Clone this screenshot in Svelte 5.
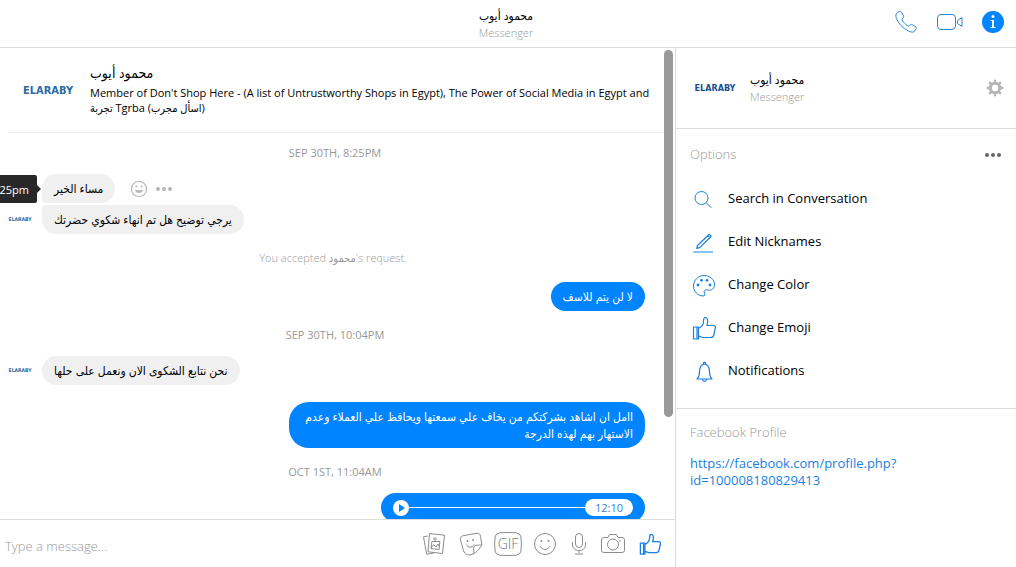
<script>
  const name = 'محمود أيوب';

  let draft = $state('');

  const options = [
    { icon: 'search', label: 'Search in Conversation' },
    { icon: 'edit', label: 'Edit Nicknames' },
    { icon: 'palette', label: 'Change Color' },
    { icon: 'like', label: 'Change Emoji' },
    { icon: 'bell', label: 'Notifications' }
  ];

  const tools = [
    { icon: 'photos', label: 'Add photos' },
    { icon: 'sticker', label: 'Choose a sticker' },
    { icon: 'gif', label: 'Choose a GIF' },
    { icon: 'smile', label: 'Choose an emoji' },
    { icon: 'mic', label: 'Record voice clip' },
    { icon: 'camera', label: 'Take photo' },
    { icon: 'like', label: 'Send a like' }
  ];
</script>

{#snippet icon(kind)}
  {#if kind === 'search'}
    <svg class="icon thin" width="24" height="24" viewBox="0 0 24 24">
      <circle cx="9.500" cy="11" r="6.500" /><path d="M14.300 15.800l5 5" />
    </svg>
  {:else if kind === 'edit'}
    <svg class="icon" width="24" height="24" viewBox="0 0 24 24">
      <path d="M4.800 18.500l.7-3L17.200 4.200l2 2L7.700 17.600zM15.700 5.600l2 2M1.500 22h19.500" />
    </svg>
  {:else if kind === 'palette'}
    <svg class="icon thin" width="24" height="24" viewBox="0 0 24 24">
      <path d="M12 2.500c6 0 10.500 4 10.500 9 0 4-3 6.500-6.500 5.500-2.500-.7-4.500.5-3.500 3 .6 1.500.8 3-1.500 3C5.500 22.500 1.500 18.500 1.500 13S6 2.500 12 2.500z" />
      <g class="solid"><circle cx="6" cy="12" r="1.400" /><circle cx="9.500" cy="7.300" r="1.400" /><circle cx="15" cy="7.300" r="1.400" /><circle cx="18" cy="12" r="1.400" /></g>
    </svg>
  {:else if kind === 'like'}
    <svg class="icon" width="24" height="24" viewBox="0 0 24 24">
      <path d="M1.500 11h5v12h-5zM5 11v12M6.500 12.500c2.500-1.200 5-3.500 5-7 0-2 .4-4 1.600-4 2 0 2.600 2 2.600 4 0 1.500-.7 2.500-.7 4h6.500c1.500 0 2.200 1 1.800 2.500l-1.500 7c-.4 2-1.300 2.500-3 2.500h-8L6.500 20" />
    </svg>
  {:else if kind === 'bell'}
    <svg class="icon" width="24" height="24" viewBox="0 0 24 24">
      <path d="M5 20c1.700-1.500 2.500-3.500 2.500-7C7.500 8 9 5.500 12.500 5c3.500.5 5 3 5 8 0 3.500.8 5.500 2.500 7zM11.300 4.800c-.3-2 2.700-2 2.400 0M10.500 20.500c.3 2.500 3.700 2.500 4 0" />
    </svg>
  {:else if kind === 'photos'}
    <svg class="icon" width="24" height="24" viewBox="0 0 24 24">
      <path d="M7.500 1.500l15 1.700-2 18.300-14.500-1.700zM5.800 4L1.500 4.800l3.200 17.500 4-.8 3-.4M9 16.500l.9-7h8l-.8 8zM9 16l2.700-3.500 2.300 2.500 2-3 1.500 3" />
      <circle cx="13" cy="7" r="1.200" />
    </svg>
  {:else if kind === 'sticker'}
    <svg class="icon" width="24" height="24" viewBox="0 0 24 24">
      <path d="M5 3.500l13-2.200c2-.3 3 .7 3.500 3l1.300 8.200c-2.300 5-6.500 9.500-11.300 10.300-4 .6-6.500-1.500-7.300-5.300L1.500 8c-.5-2.500.8-4.100 3.500-4.500zM22.800 12.500c-3 1.500-7-.5-8 2.500-.6 2.500.8 5-.8 7" />
      <path d="M7.500 12.500c1.500 3.500 5.500 3.500 7.500 0" />
      <g class="solid"><circle cx="8.500" cy="9" r="1" /><circle cx="14" cy="8" r="1" /></g>
    </svg>
  {:else if kind === 'gif'}
    <svg class="icon" width="28" height="24" viewBox="0 0 28 24">
      <path d="M6 .8q8-.7 16 0 4.500.4 5 4.200.7 7 0 14-.5 3.800-5 4.200-8 .7-16 0Q1.500 22.800 1 19 .3 12 1 5 1.500 1.200 6 .8z" />
      <text x="14" y="17" text-anchor="middle">GIF</text>
    </svg>
  {:else if kind === 'smile'}
    <svg class="icon" width="24" height="24" viewBox="0 0 24 24">
      <circle cx="12" cy="12" r="10.500" /><path d="M7 14c2 4.500 8 4.500 10 0" />
      <g class="solid"><circle cx="8.500" cy="9" r="1" /><circle cx="15.500" cy="9" r="1" /></g>
    </svg>
  {:else if kind === 'mic'}
    <svg class="icon" width="18" height="24" viewBox="0 0 18 24">
      <rect x="5.500" y="1.500" width="7" height="14" rx="3.500" /><path d="M2.500 10v3c0 7.500 13 7.500 13 0v-3M9 18.500v3M5 22h8" />
    </svg>
  {:else if kind === 'camera'}
    <svg class="icon" width="24" height="24" viewBox="0 0 24 24">
      <path d="M3 5.500h4l1.500-3h7l1.500 3h4q2.500 0 2.500 2.500v10.500q0 2-2.500 2H3q-2.500 0-2.500-2V8Q.5 5.500 3 5.500z" />
      <circle cx="12" cy="12.500" r="5.500" /><circle class="solid" cx="19" cy="9" r=".8" />
    </svg>
  {/if}
{/snippet}

{#snippet dots()}
  <svg class="dots" width="18" height="6" viewBox="0 0 18 6">
    <circle cx="3" cy="3" r="2" /><circle cx="9" cy="3" r="2" /><circle cx="15" cy="3" r="2" />
  </svg>
{/snippet}

<div class="app">
  <header class="topbar">
    <div class="topbar-title">
      <h1 class="name">{name}</h1>
      <div class="sub">Messenger</div>
    </div>
    <nav class="calls" aria-label="Conversation actions">
      <button aria-label="Start a voice call">
        <svg class="icon thin" width="24" height="24" viewBox="0 0 24 24">
          <path d="M3.500 2.500l2-1c1-.4 1.700 0 2.200 1l1.800 3.500c.5 1 .1 1.800-1.500 3 .3 2.500 4.500 7 7 7.200 1.300-1.500 2-2 3.200-1.400l3 1.700c1.200.7 1.300 1.500.7 2.500l-1 1.800c-1.200 2-4 1.400-6.500.2C8.500 18 4.500 13.500 2.500 8.700 1.500 6 1.500 3.700 3.500 2.500z" />
        </svg>
      </button>
      <button aria-label="Start a video call">
        <svg class="icon thin" width="28" height="24" viewBox="0 0 28 24">
          <rect x="1.500" y="4.500" width="18" height="15" rx="3.500" /><path d="M21.500 10.500l4.500-3v9l-4.500-3z" />
        </svg>
      </button>
      <button aria-label="Conversation information">
        <svg width="22" height="22" viewBox="0 0 22 22">
          <circle cx="11" cy="11" r="11" fill="#0084ff" />
          <circle cx="11" cy="5.500" r="1.500" fill="#fff" />
          <path d="M8.500 9h3.500v7h1.500v1h-5v-1H10v-6H8.500z" fill="#fff" />
        </svg>
      </button>
    </nav>
  </header>

  <div class="columns">
    <main class="chat">
      <div class="thread">
        <section class="intro">
          <span class="logo logo-lg">ELARABY</span>
          <div>
            <h2 class="intro-name">{name}</h2>
            <p>Member of Don't Shop Here - (A list of Untrustworthy Shops in Egypt), The Power of Social Media in Egypt and تجربة Tgrba (اسأل مجرب)</p>
          </div>
        </section>

        <time class="stamp">SEP 30TH, 8:25PM</time>

        <div class="group">
          <div class="row">
            <div class="bubble first" dir="rtl">
              مساء الخير
              <span class="tooltip" dir="ltr">8:25pm</span>
            </div>
            <div class="row-actions">
              <button aria-label="React">
                <svg class="icon" width="18" height="18" viewBox="0 0 18 18">
                  <circle cx="9" cy="9" r="7.500" /><path class="solid" d="M5 10h8c-.5 4-7.500 4-8 0z" />
                  <g class="solid"><circle cx="6.300" cy="6.500" r="1" /><circle cx="11.700" cy="6.500" r="1" /></g>
                </svg>
              </button>
              <button aria-label="More">{@render dots()}</button>
            </div>
          </div>
          <div class="row">
            <span class="logo logo-sm">ELARABY</span>
            <div class="bubble last" dir="rtl">يرجي توضيح هل تم انهاء شكوي حضرتك</div>
          </div>
        </div>

        <p class="notice">You accepted محمود's request.</p>

        <div class="row sent">
          <div class="bubble" dir="rtl">لا لن يتم للاسف</div>
        </div>

        <time class="stamp">SEP 30TH, 10:04PM</time>

        <div class="row">
          <span class="logo logo-sm">ELARABY</span>
          <div class="bubble" dir="rtl">نحن نتابع الشكوى الان ونعمل على حلها</div>
        </div>

        <div class="row sent later">
          <div class="bubble" dir="rtl">اامل ان اشاهد بشركتكم من يخاف علي سمعتها ويحافظ علي العملاء وعدم الاستهار بهم لهذه الدرجة</div>
        </div>

        <time class="stamp">OCT 1ST, 11:04AM</time>

        <div class="row sent">
          <div class="bubble audio">
            <button class="play" aria-label="Play">
              <svg width="16" height="16" viewBox="0 0 16 16"><path d="M6 4l6 4-6 4z" fill="#0084ff" /></svg>
            </button>
            <span class="track"></span>
            <span class="length">12:10</span>
          </div>
        </div>
      </div>
      <div class="scrollbar"></div>

      <form class="composer" onsubmit={(e) => e.preventDefault()}>
        <input bind:value={draft} type="text" placeholder="Type a message..." aria-label="Type a message" />
        <div class="tools">
          {#each tools as tool}
            <button
              type="button"
              class:narrow={tool.icon === 'mic'}
              class:active={tool.icon === 'like'}
              aria-label={tool.label}
            >
              {@render icon(tool.icon)}
            </button>
          {/each}
        </div>
      </form>
    </main>

    <aside class="details">
      <section class="person">
        <span class="logo logo-md">ELARABY</span>
        <div class="person-text">
          <h2 class="name">{name}</h2>
          <div class="sub">Messenger</div>
        </div>
        <button class="gear" aria-label="Settings">
          <svg width="18" height="18" viewBox="0 0 18 18">
            <circle cx="9" cy="9" r="4.700" fill="none" stroke="currentColor" stroke-width="3" />
            <path d="M9 .8v3M9 14.200v3M.8 9h3M14.200 9h3M3.200 3.200l2.200 2.200M12.600 12.600l2.200 2.200M3.200 14.800l2.200-2.200M12.600 5.400l2.200-2.200" stroke="currentColor" stroke-width="2.400" />
          </svg>
        </button>
      </section>

      <section class="options">
        <div class="section-head">
          <h3>Options</h3>
          <button aria-label="More options">{@render dots()}</button>
        </div>
        <ul>
          {#each options as option}
            <li>
              <button class="option">
                {@render icon(option.icon)}
                <span>{option.label}</span>
              </button>
            </li>
          {/each}
        </ul>
      </section>

      <section class="profile">
        <h3>Facebook Profile</h3>
        <a href="https://facebook.com/profile.php?id=100008180829413">https://facebook.com/profile.php?<wbr />id=100008180829413</a>
      </section>
    </aside>
  </div>
</div>

<style>
  :global(body) {
    margin: 0;
    background: #fff;
  }

  .app {
    --blue: #0084ff;
    --line: #dcdcdc;
    --muted: #999;
    display: flex;
    flex-direction: column;
    height: 100vh;
    overflow: hidden;
    color: #000;
    font-family: 'Open Sans', 'DejaVu Sans Condensed', 'DejaVu Sans', sans-serif;
    font-size: 13px;
    line-height: 17px;
  }

  h1, h2, h3, p, ul {
    margin: 0;
    padding: 0;
    font-weight: 400;
    list-style: none;
  }

  button {
    display: flex;
    align-items: center;
    padding: 0;
    border: none;
    background: none;
    color: inherit;
    font: inherit;
    cursor: pointer;
  }

  .icon {
    display: block;
    flex-shrink: 0;
    fill: none;
    stroke: currentColor;
    stroke-width: 1.2;
    stroke-linejoin: round;
  }

  .icon.thin {
    stroke-width: 1;
  }

  .icon .solid {
    fill: currentColor;
    stroke: none;
  }

  .icon text {
    fill: #777;
    stroke: none;
    font-size: 14px;
    font-weight: 300;
  }

  .dots {
    display: block;
    fill: currentColor;
  }

  .name {
    font-size: 12px;
    line-height: 18px;
  }

  .sub {
    color: var(--muted);
    font-size: 11px;
    font-weight: 300;
    line-height: 15px;
  }

  .logo {
    flex-shrink: 0;
    color: #2a6ba5;
    font-family: 'DejaVu Sans Condensed', 'DejaVu Sans', sans-serif;
    font-weight: 700;
    text-align: center;
  }

  .logo-lg {
    width: 64px;
    margin-right: 10px;
    font-size: 11px;
  }

  .logo-md {
    width: 50px;
    color: #17528f;
    font-size: 9px;
  }

  .logo-sm {
    width: 24px;
    margin-right: 10px;
    font-size: 5px;
  }

  .topbar {
    display: grid;
    grid-template-columns: 1fr auto 1fr;
    align-items: center;
    flex-shrink: 0;
    height: 47px;
    border-bottom: 1px solid var(--line);
  }

  .topbar-title {
    grid-column: 2;
    padding-right: 4px;
    text-align: center;
  }

  .calls {
    display: flex;
    align-items: center;
    justify-content: flex-end;
    gap: 18px;
    padding: 0 12px 4px 0;
    color: #2a86dc;
  }

  .columns {
    display: flex;
    flex: 1;
    min-height: 0;
  }

  .chat {
    position: relative;
    display: flex;
    flex: 1;
    flex-direction: column;
    min-width: 0;
  }

  .thread {
    flex: 1;
    min-height: 0;
    padding: 0 11px 0 8px;
    overflow: hidden;
  }

  .scrollbar {
    position: absolute;
    top: 2px;
    right: 2px;
    width: 9px;
    height: 367px;
    border-radius: 5px;
    background: #999;
  }

  .intro {
    display: flex;
    align-items: center;
    padding: 16px 8px;
    border-bottom: 1px solid #ebebeb;
  }

  .intro > div {
    flex: 1;
  }

  .intro-name {
    font-size: 14px;
    line-height: 18px;
  }

  .intro p {
    padding: 3px 0 1px;
    font-size: 11px;
    line-height: 15px;
  }

  .stamp,
  .notice {
    display: block;
    margin-right: 2px;
    color: var(--muted);
    font-size: 11px;
    line-height: 17px;
    text-align: center;
  }

  .stamp {
    padding: 11px 0 13px;
  }

  .notice {
    padding: 15px 4px 16px 0;
    font-weight: 300;
  }

  .group {
    display: flex;
    flex-direction: column;
    gap: 2px;
  }

  .row {
    display: flex;
    align-items: center;
  }

  .row > .bubble:first-child {
    margin-left: 34px;
  }

  .bubble {
    position: relative;
    max-width: 332px;
    padding: 6px 12px;
    border-radius: 15px;
    background: #f1f0f0;
    font-size: 12px;
  }

  .bubble.first {
    border-bottom-left-radius: 4px;
  }

  .bubble.last {
    border-top-left-radius: 4px;
  }

  .sent {
    justify-content: flex-end;
    padding: 0 19px 4px 0;
  }

  .sent .bubble {
    background: var(--blue);
    color: #fff;
  }

  .later {
    margin-top: 17px;
  }

  .later .bubble {
    border-radius: 20px;
  }

  .tooltip {
    position: absolute;
    top: 1px;
    right: 100%;
    margin-right: 5px;
    padding: 6px 8px 5px;
    border-radius: 2px;
    background: #282828;
    color: #fff;
    font-size: 11px;
  }

  .tooltip::after {
    content: '';
    position: absolute;
    top: 10px;
    left: 100%;
    border: 4px solid transparent;
    border-right: none;
    border-left-color: #282828;
  }

  .row-actions {
    display: flex;
    align-items: center;
    gap: 7px;
    margin-left: 15px;
    color: #b8b8b8;
  }

  .audio {
    display: flex;
    align-items: center;
    width: 240px;
  }

  .play {
    border-radius: 50%;
    background: #fff;
  }

  .track {
    flex: 1;
    height: 1px;
    background: #fff;
  }

  .length {
    padding: 0 10px;
    border-radius: 9px;
    background: #fff;
    color: #3a7fd0;
    font-size: 11px;
  }

  .composer {
    display: flex;
    align-items: center;
    flex-shrink: 0;
    height: 47px;
    border-top: 1px solid var(--line);
  }

  .composer input {
    flex: 1;
    min-width: 0;
    padding: 5px 5px 0;
    border: none;
    outline: none;
    background: none;
    font: inherit;
  }

  .composer input::placeholder {
    color: #999;
    font-weight: 300;
    opacity: 1;
  }

  .tools {
    display: flex;
    align-items: center;
    gap: 13px;
    padding-right: 13px;
    color: #8c8c8c;
  }

  .tools button {
    justify-content: center;
    width: 24px;
  }

  .tools .narrow {
    width: 18px;
  }

  .tools .icon {
    stroke-width: 1;
  }

  .tools .active {
    color: #1581e6;
  }

  .tools .active .icon {
    width: 22px;
    height: 22px;
    stroke-width: 1.4;
  }

  .details {
    display: flex;
    flex-direction: column;
    width: 340px;
    border-left: 1px solid var(--line);
  }

  .person {
    display: flex;
    align-items: center;
    height: 80px;
    padding: 0 12px 0 14px;
    border-bottom: 1px solid var(--line);
  }

  .person-text {
    flex: 1;
    margin-left: 10px;
    padding-bottom: 2px;
  }

  .gear {
    color: #b5b5b5;
  }

  .options {
    padding: 17px 14px 16px;
    border-bottom: 1px solid var(--line);
  }

  .section-head {
    display: flex;
    justify-content: space-between;
    padding-bottom: 14px;
    color: #666;
  }

  h3 {
    color: var(--muted);
    font-size: 13px;
    font-weight: 300;
    line-height: 17px;
  }

  .option {
    gap: 12px;
    width: 100%;
    height: 43px;
    color: #000;
    text-align: left;
  }

  .option .icon {
    margin-left: 2px;
    color: #1c80dc;
  }

  .profile {
    padding: 15px 14px;
  }

  .profile a {
    display: block;
    margin-top: 14px;
    color: #1a7fe0;
    text-decoration: none;
  }
</style>
